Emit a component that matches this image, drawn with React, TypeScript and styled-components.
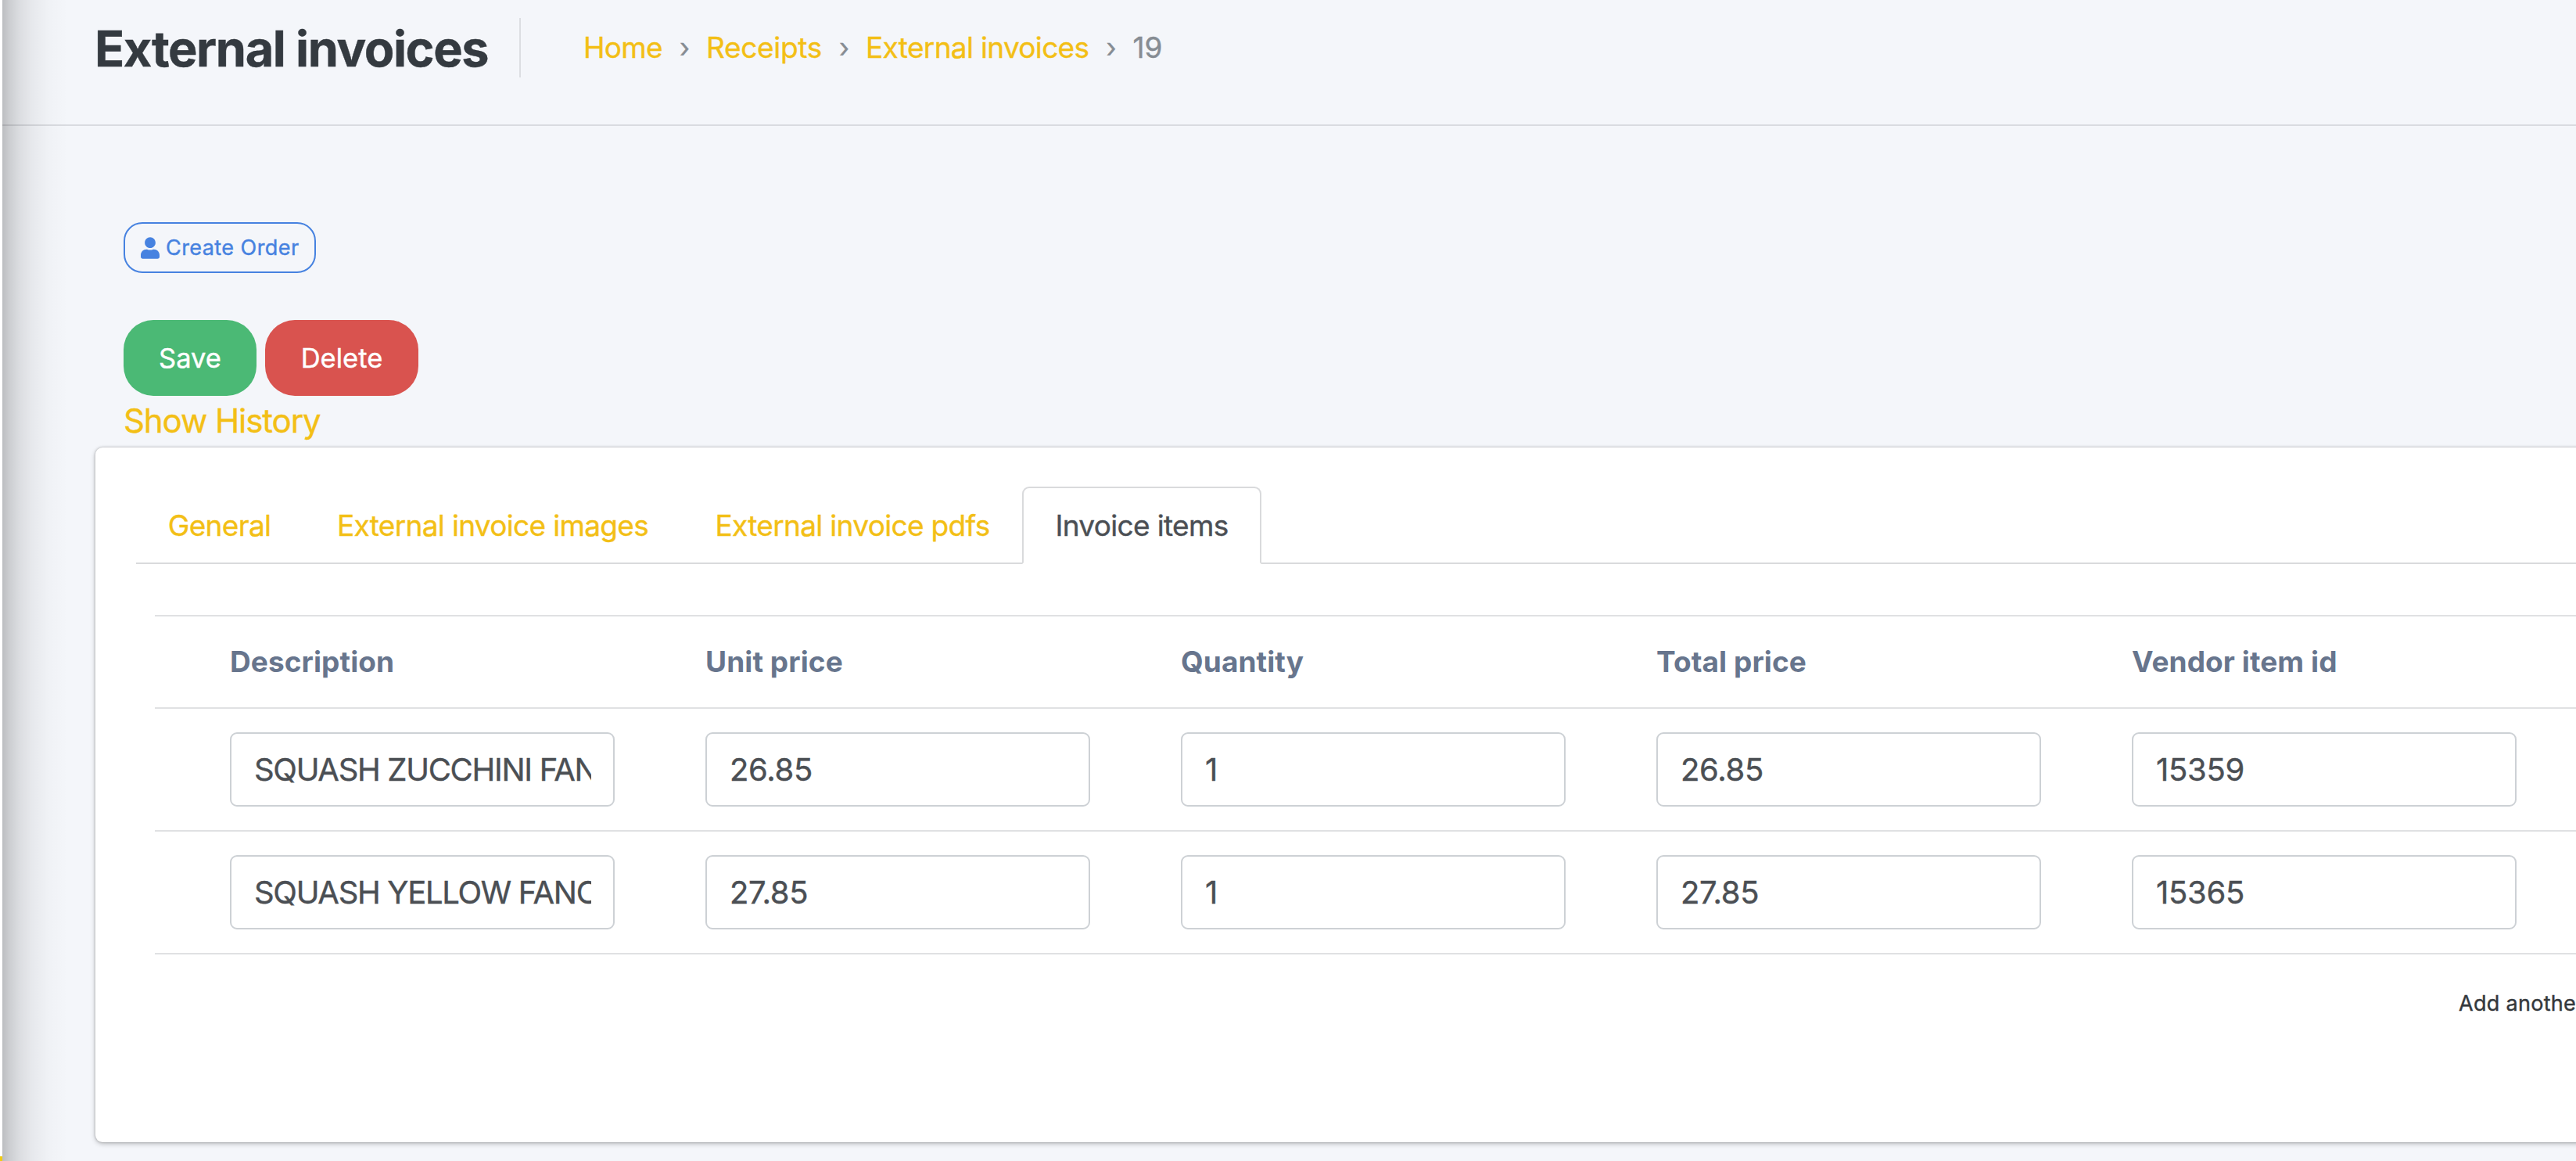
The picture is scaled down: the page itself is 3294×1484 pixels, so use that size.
import { FaUser } from 'react-icons/fa'
import styled, { createGlobalStyle } from 'styled-components'

const YELLOW = '#f3bf16'
const TAB_BORDER = '#d9dadc'
const ROW_BORDER = '#e0e1e3'

const GlobalStyle = createGlobalStyle`
  * {
    box-sizing: border-box;
  }
  body {
    margin: 0;
    overflow: hidden;
    background: #f4f6fa;
    font-family: Inter, 'Liberation Sans', sans-serif;
    -webkit-text-stroke-width: 0.4px;
    color: #4b4f54;
  }
`

const Page = styled.div`
  display: flex;
  width: 100vw;
  height: 100vh;
  overflow: hidden;
`

const SidebarEdge = styled.div`
  display: flex;
  flex: 0 0 3px;
  flex-direction: column;
  justify-content: flex-end;
  background: #fff;

  &::after {
    content: '';
    height: 6px;
    background: #f0cb14;
  }
`

const Main = styled.main`
  position: relative;
  flex: 1;
  min-width: 0;

  /* shadow thrown by the sidebar over the content */
  &::before {
    content: '';
    position: absolute;
    top: 0;
    bottom: 0;
    left: 0;
    width: 84px;
    background: linear-gradient(
      90deg,
      rgba(0, 0, 0, 0.23) 0,
      rgba(0, 0, 0, 0.165) 9px,
      rgba(0, 0, 0, 0.1) 22px,
      rgba(0, 0, 0, 0.055) 38px,
      rgba(0, 0, 0, 0.02) 58px,
      rgba(0, 0, 0, 0) 84px
    );
    pointer-events: none;
  }
`

const Header = styled.header`
  display: flex;
  align-items: flex-start;
  height: 161px;
  padding: 23px 0 0 118px;
  border-bottom: 2px solid #d9dbe0;
`

const Title = styled.h1`
  width: 545px;
  height: 76px;
  margin: 0;
  border-right: 2px solid #dcdee2;
  font-size: 63px;
  font-weight: 700;
  line-height: 78px;
  letter-spacing: -1.4px;
  white-space: nowrap;
  color: #343a40;
`

const Breadcrumb = styled.nav`
  display: flex;
  margin-left: 80px;
  font-size: 37px;
  line-height: 75px;
  letter-spacing: 0;
  white-space: nowrap;
  color: #868c93;
`

const Crumb = styled.a<{ $tracking?: number }>`
  color: ${YELLOW};
  letter-spacing: ${(props) => props.$tracking ?? -0.67}px;
`

const Separator = styled.span`
  width: 56px;
  padding-left: 22px;
  font-size: 34px;
`

const Actions = styled.section`
  display: flex;
  flex-direction: column;
  align-items: flex-start;
  padding: 123px 0 0 155px;
`

const OutlineButton = styled.button`
  display: flex;
  align-items: center;
  width: 246px;
  height: 65px;
  padding: 0 0 0 20px;
  border: 2px solid #4682e0;
  border-radius: 24px;
  background: transparent;
  font-family: inherit;
  font-size: 27px;
  letter-spacing: 0.44px;
  white-space: nowrap;
  color: #4682e0;

  svg {
    flex: none;
    width: 24px;
    height: 28px;
    margin-right: 8px;
  }
`

const ButtonRow = styled.div`
  display: flex;
  gap: 11px;
  margin-top: 60px;
`

const Button = styled.button<{ $color: string; $width: number }>`
  width: ${(props) => props.$width}px;
  height: 97px;
  padding: 0;
  border: none;
  border-radius: 38px;
  background: ${(props) => props.$color};
  font-family: inherit;
  font-size: 34.5px;
  color: #fff;
`

const HistoryLink = styled.a`
  margin-bottom: 2px;
  font-size: 42px;
  line-height: 64px;
  letter-spacing: -1.08px;
  color: ${YELLOW};
`

const Card = styled.section`
  height: 888px;
  margin-left: 119px;
  margin-right: -20px;
  padding: 50px 0 0 52px;
  border-radius: 9px;
  background: #fff;
  box-shadow: 0 0 3px rgba(0, 0, 0, 0.25), 0 2px 6px rgba(0, 0, 0, 0.24);
`

const Tabs = styled.div`
  display: flex;
  height: 99px;
  border-bottom: 2px solid ${TAB_BORDER};
`

const Tab = styled.a<{ $width: number; $active?: boolean }>`
  width: ${(props) => props.$width}px;
  height: 99px;
  border: 2px solid transparent;
  ${(props) =>
    props.$active &&
    `border-color: ${TAB_BORDER} ${TAB_BORDER} #fff;
  background: #fff;`}
  border-radius: 9px 9px 0 0;
  font-size: 37px;
  line-height: 96px;
  letter-spacing: -0.67px;
  text-align: center;
  white-space: nowrap;
  color: ${(props) => (props.$active ? '#4b4f54' : YELLOW)};
`

const Table = styled.div`
  margin: 65px 0 0 24px;
  border-top: 2px solid ${ROW_BORDER};
`

const Row = styled.div`
  display: grid;
  grid-template-columns: repeat(5, 608px);
  padding-left: 96px;
  border-bottom: 2px solid ${ROW_BORDER};
`

const HeadCell = styled.div`
  font-size: 37px;
  font-weight: 700;
  line-height: 116px;
  letter-spacing: 0.08px;
  -webkit-text-stroke-width: 0;
  color: #67758d;
`

const Field = styled.input<{ $tracking?: number }>`
  width: 492px;
  height: 95px;
  margin: 30px 0;
  padding: 0 28px 0 29px;
  border: 2px solid #cdd1d5;
  border-radius: 9px;
  outline: none;
  background: #fff;
  font-family: inherit;
  font-size: 40px;
  letter-spacing: ${(props) => props.$tracking ?? 0}px;
  color: #4b4f54;
`

const AddRow = styled.div`
  margin-top: 43px;
  padding-left: 2970px;
  font-size: 27px;
  line-height: 40px;
  letter-spacing: 0.3px;
  white-space: nowrap;
  color: #34383c;
`

const tabs = [
  { label: 'General', width: 213 },
  { label: 'External invoice images', width: 486 },
  { label: 'External invoice pdfs', width: 434 },
  { label: 'Invoice items', width: 306, active: true },
]

const columns = [
  'Description',
  'Unit price',
  'Quantity',
  'Total price',
  'Vendor item id',
]

const items = [
  ['SQUASH ZUCCHINI FANCY', '26.85', '1', '26.85', '15359'],
  ['SQUASH YELLOW FANCY', '27.85', '1', '27.85', '15365'],
]

const App = () => (
  <>
    <GlobalStyle />
    <Page>
      <SidebarEdge />
      <Main>
        <Header>
          <Title>External invoices</Title>
          <Breadcrumb>
            <Crumb>Home</Crumb>
            <Separator>›</Separator>
            <Crumb $tracking={-0.3}>Receipts</Crumb>
            <Separator>›</Separator>
            <Crumb>External invoices</Crumb>
            <Separator>›</Separator>
            <span>19</span>
          </Breadcrumb>
        </Header>
        <Actions>
          <OutlineButton>
            <FaUser />
            Create Order
          </OutlineButton>
          <ButtonRow>
            <Button $color='#4bb975' $width={170}>
              Save
            </Button>
            <Button $color='#d9534f' $width={196}>
              Delete
            </Button>
          </ButtonRow>
          <HistoryLink>Show History</HistoryLink>
        </Actions>
        <Card>
          <Tabs>
            {tabs.map((tab) => (
              <Tab key={tab.label} $width={tab.width} $active={tab.active}>
                {tab.label}
              </Tab>
            ))}
          </Tabs>
          <Table>
            <Row>
              {columns.map((column) => (
                <HeadCell key={column}>{column}</HeadCell>
              ))}
            </Row>
            {items.map((item) => (
              <Row key={item[0]}>
                {item.map((value, i) => (
                  <Field
                    key={columns[i]}
                    defaultValue={value}
                    $tracking={i === 0 ? -1.3 : -0.3}
                  />
                ))}
              </Row>
            ))}
          </Table>
          <AddRow>Add anothe</AddRow>
        </Card>
      </Main>
    </Page>
  </>
)

export default App
